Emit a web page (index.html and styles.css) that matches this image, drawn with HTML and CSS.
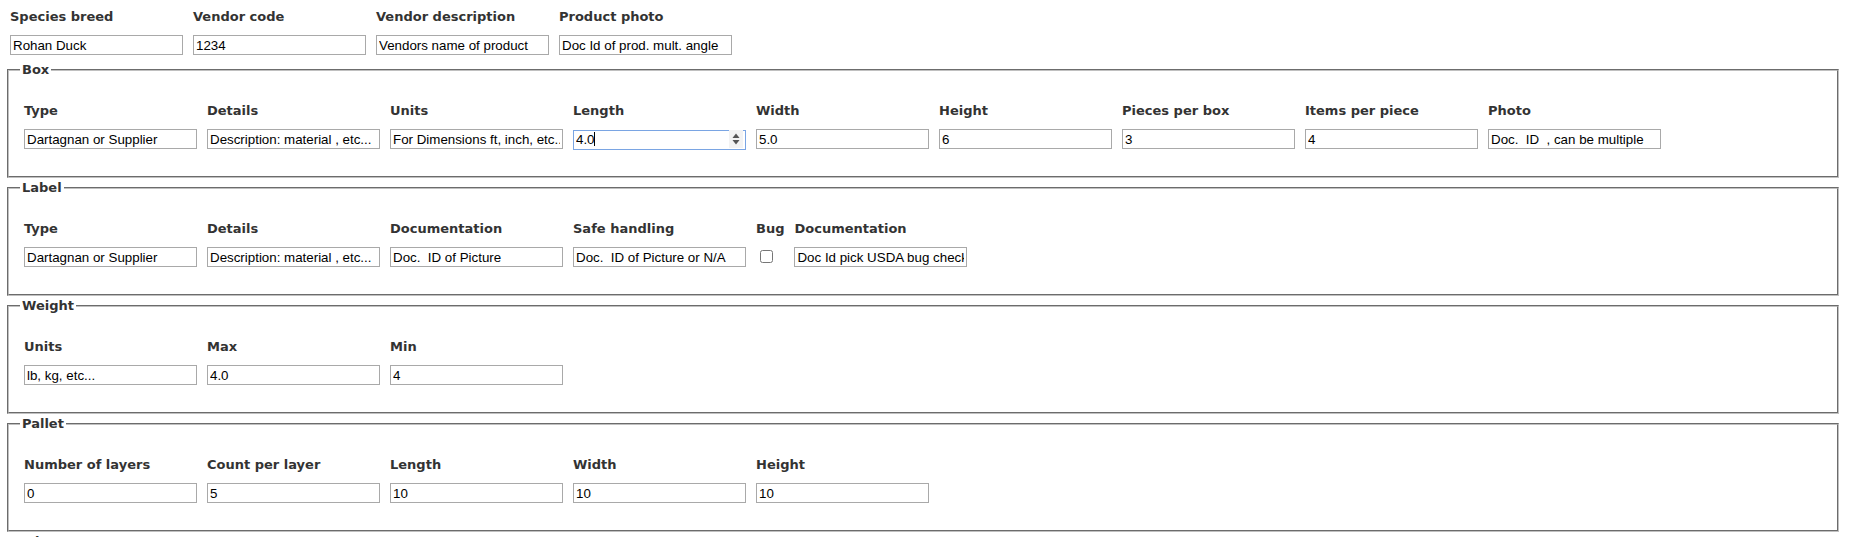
FILE: index.html
```html
<!DOCTYPE html>
<html>
<head>
<meta charset="utf-8">
<title>Product</title>
<link rel="stylesheet" href="styles.css">
</head>
<body>
<div class="row top">
  <div class="field"><label class="lbl">Species breed</label><input class="inp" value="Rohan Duck"></div>
  <div class="field"><label class="lbl">Vendor code</label><input class="inp" value="1234"></div>
  <div class="field"><label class="lbl">Vendor description</label><input class="inp" value="Vendors name of product"></div>
  <div class="field"><label class="lbl">Product photo</label><input class="inp" value="Doc Id of prod. mult. angle"></div>
</div>

<fieldset class="group first">
  <legend>Box</legend>
  <div class="row">
    <div class="field"><label class="lbl">Type</label><input class="inp" value="Dartagnan or Supplier"></div>
    <div class="field"><label class="lbl">Details</label><input class="inp" value="Description: material , etc..."></div>
    <div class="field"><label class="lbl">Units</label><input class="inp" value="For Dimensions ft, inch, etc.."></div>
    <div class="field"><label class="lbl">Length</label>
      <div class="spin-wrap">
        <input class="inp focus" value="4.0">
        <span class="caret"></span>
        <svg class="spin" width="14" height="18" viewBox="0 0 14 18"><rect x="0" y="0" width="14" height="18" fill="#f3f3f3"/><path d="M3.5 8 L7 3.5 L10.5 8 Z" fill="#555"/><path d="M3.5 10 L7 14.5 L10.5 10 Z" fill="#555"/></svg>
      </div>
    </div>
    <div class="field"><label class="lbl">Width</label><input class="inp" value="5.0"></div>
    <div class="field"><label class="lbl">Height</label><input class="inp" value="6"></div>
    <div class="field"><label class="lbl">Pieces per box</label><input class="inp" value="3"></div>
    <div class="field"><label class="lbl">Items per piece</label><input class="inp" value="4"></div>
    <div class="field"><label class="lbl">Photo</label><input class="inp" value="Doc.  ID  , can be multiple"></div>
  </div>
</fieldset>

<fieldset class="group">
  <legend>Label</legend>
  <div class="row">
    <div class="field"><label class="lbl">Type</label><input class="inp" value="Dartagnan or Supplier"></div>
    <div class="field"><label class="lbl">Details</label><input class="inp" value="Description: material , etc..."></div>
    <div class="field"><label class="lbl">Documentation</label><input class="inp" value="Doc.  ID of Picture"></div>
    <div class="field"><label class="lbl">Safe handling</label><input class="inp" value="Doc.  ID of Picture or N/A"></div>
    <div class="field narrow"><label class="lbl">Bug</label><input class="chk" type="checkbox"></div>
    <div class="field"><label class="lbl">Documentation</label><input class="inp" value="Doc Id pick USDA bug check"></div>
  </div>
</fieldset>

<fieldset class="group">
  <legend>Weight</legend>
  <div class="row">
    <div class="field"><label class="lbl">Units</label><input class="inp" value="lb, kg, etc..."></div>
    <div class="field"><label class="lbl">Max</label><input class="inp" value="4.0"></div>
    <div class="field"><label class="lbl">Min</label><input class="inp" value="4"></div>
  </div>
</fieldset>

<fieldset class="group">
  <legend>Pallet</legend>
  <div class="row">
    <div class="field"><label class="lbl">Number of layers</label><input class="inp" value="0"></div>
    <div class="field"><label class="lbl">Count per layer</label><input class="inp" value="5"></div>
    <div class="field"><label class="lbl">Length</label><input class="inp" value="10"></div>
    <div class="field"><label class="lbl">Width</label><input class="inp" value="10"></div>
    <div class="field"><label class="lbl">Height</label><input class="inp" value="10"></div>
  </div>
</fieldset>

<fieldset class="group">
  <legend>Misc</legend>
  <div class="row">
    <div class="field"><label class="lbl">Notes</label><input class="inp" value=""></div>
  </div>
</fieldset>
</body>
</html>
```

FILE: styles.css
```css
html, body {
  overflow: hidden;
}
body {
  margin: 0;
  padding: 9px 0 0 0;
  background: #ffffff;
  font-family: "DejaVu Sans", Verdana, sans-serif;
  color: #333333;
}
.row {
  display: flex;
  gap: 10px;
  align-items: flex-start;
}
.top {
  padding-left: 10px;
}
.field {
  display: flex;
  flex-direction: column;
  width: 173px;
}
.field.narrow {
  width: auto;
}
.lbl {
  font-size: 13px;
  font-weight: bold;
  line-height: 15px;
  margin-bottom: 11px;
  white-space: nowrap;
}
.inp {
  box-sizing: border-box;
  width: 173px;
  height: 20px;
  margin: 0;
  padding: 0 2px;
  border: 1px solid #a9a9a9;
  font-family: "Liberation Sans", Arial, sans-serif;
  font-size: 13.333px;
  color: #000000;
  background: #ffffff;
  outline: none;
}
.inp.focus {
  border-color: #7aa5e3;
}
.chk {
  width: 13px;
  height: 13px;
  margin: 3px 3px 3px 4px;
}
.spin-wrap {
  position: relative;
  width: 173px;
  height: 20px;
}
.caret {
  position: absolute;
  left: 21px;
  top: 3px;
  width: 1px;
  height: 14px;
  background: #000000;
}
.spin {
  position: absolute;
  right: 3px;
  top: 1px;
}
.group {
  margin: 2px 15px 0 7px;
  padding: 26px 15px 27px 15px;
  border: 2px groove #c0c0c0;
  min-width: 0;
}
.group.first {
  margin-top: 7px;
}
legend {
  font-family: "DejaVu Sans", Verdana, sans-serif;
  font-size: 13px;
  font-weight: bold;
  line-height: 15px;
  color: #333333;
  padding: 0 2px;
  margin-left: -4px;
}
```
